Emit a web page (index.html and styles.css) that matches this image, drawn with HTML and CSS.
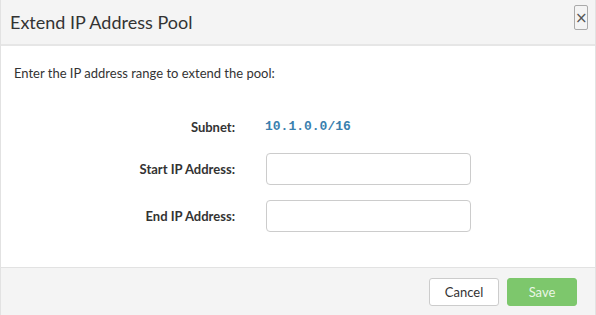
FILE: index.html
```html
<!DOCTYPE html>
<html lang="en">
<head>
  <meta charset="UTF-8" />
  <title>Extend IP Address Pool</title>
  <link rel="stylesheet" href="styles.css">
</head>
<body>
  <div class="dialog">
    <div class="dialog-header">
      <h2>Extend IP Address Pool</h2>
      <button class="close" type="button">&times;</button>
    </div>

    <div class="dialog-body">
      <p class="intro">Enter the IP address range to extend the pool:</p>
      <div class="form">
        <label class="subnet-label">Subnet:</label>
        <span class="subnet">10.1.0.0/16</span>
        <label for="startIp">Start IP Address:</label>
        <input id="startIp" type="text">
        <label for="endIp">End IP Address:</label>
        <input id="endIp" type="text">
      </div>
    </div>

    <div class="dialog-footer">
      <button class="btn" type="button">Cancel</button>
      <button class="btn btn-save" type="button">Save</button>
    </div>
  </div>
</body>
</html>
```

FILE: styles.css
```css
* {
  box-sizing: border-box;
  margin: 0;
  padding: 0;
}

body {
  font-family: Lato, "Liberation Sans", sans-serif;
  color: #333;
  background: #fff;
}

.dialog {
  width: 596px;
  height: 315px;
  display: flex;
  flex-direction: column;
  border-left: 1px solid #e2e2e2;
  border-right: 1px solid #e2e2e2;
}

/* Header */
.dialog-header {
  height: 46px;
  background: #f4f4f4;
  border-bottom: 2px solid #e6e6e6;
  display: flex;
  justify-content: space-between;
  align-items: flex-start;
  padding: 0 7px 0 9px;
}

.dialog-header h2 {
  font-size: 18px;
  font-weight: normal;
  color: #333;
  line-height: 44px;
}

.close {
  margin-top: 5px;
  width: 14px;
  height: 25px;
  border: 1.5px solid #aaa;
  border-radius: 2px;
  background: transparent;
  color: #555;
  font-family: "DejaVu Sans", sans-serif;
  font-size: 15px;
  line-height: 20px;
  text-align: center;
}

/* Body */
.dialog-body {
  flex: 1;
  padding: 18px 13px 0;
}

.intro {
  font-size: 13px;
  line-height: 18px;
}

.form {
  margin-top: 34px;
  margin-left: -14px;
  display: grid;
  grid-template-columns: 235px 205px;
  grid-template-rows: 22px 32px 32px;
  column-gap: 31px;
  row-gap: 15px;
  align-items: center;
}

.form label {
  font-size: 13px;
  font-weight: bold;
  text-align: right;
}

.subnet {
  font-family: "Liberation Mono", monospace;
  font-size: 13px;
  font-weight: bold;
  color: #3a7fae;
  margin-top: -2px;
  margin-left: -1px;
}

.form input {
  height: 32px;
  border: 1px solid #ccc;
  border-radius: 4px;
  padding: 0 8px;
  font-size: 13px;
}

/* Footer */
.dialog-footer {
  height: 48px;
  background: #f4f4f4;
  border-top: 1px solid #e2e2e2;
  display: flex;
  justify-content: flex-end;
  gap: 8px;
  padding: 10px 18px 0 0;
}

.btn {
  width: 70px;
  height: 28px;
  border: 1px solid #ccc;
  border-radius: 3px;
  background: #fff;
  color: #333;
  font-family: Lato, "Liberation Sans", sans-serif;
  font-size: 13px;
}

.btn-save {
  background: #7dc76c;
  border-color: #7dc76c;
  color: #eaf6e6;
}
```
